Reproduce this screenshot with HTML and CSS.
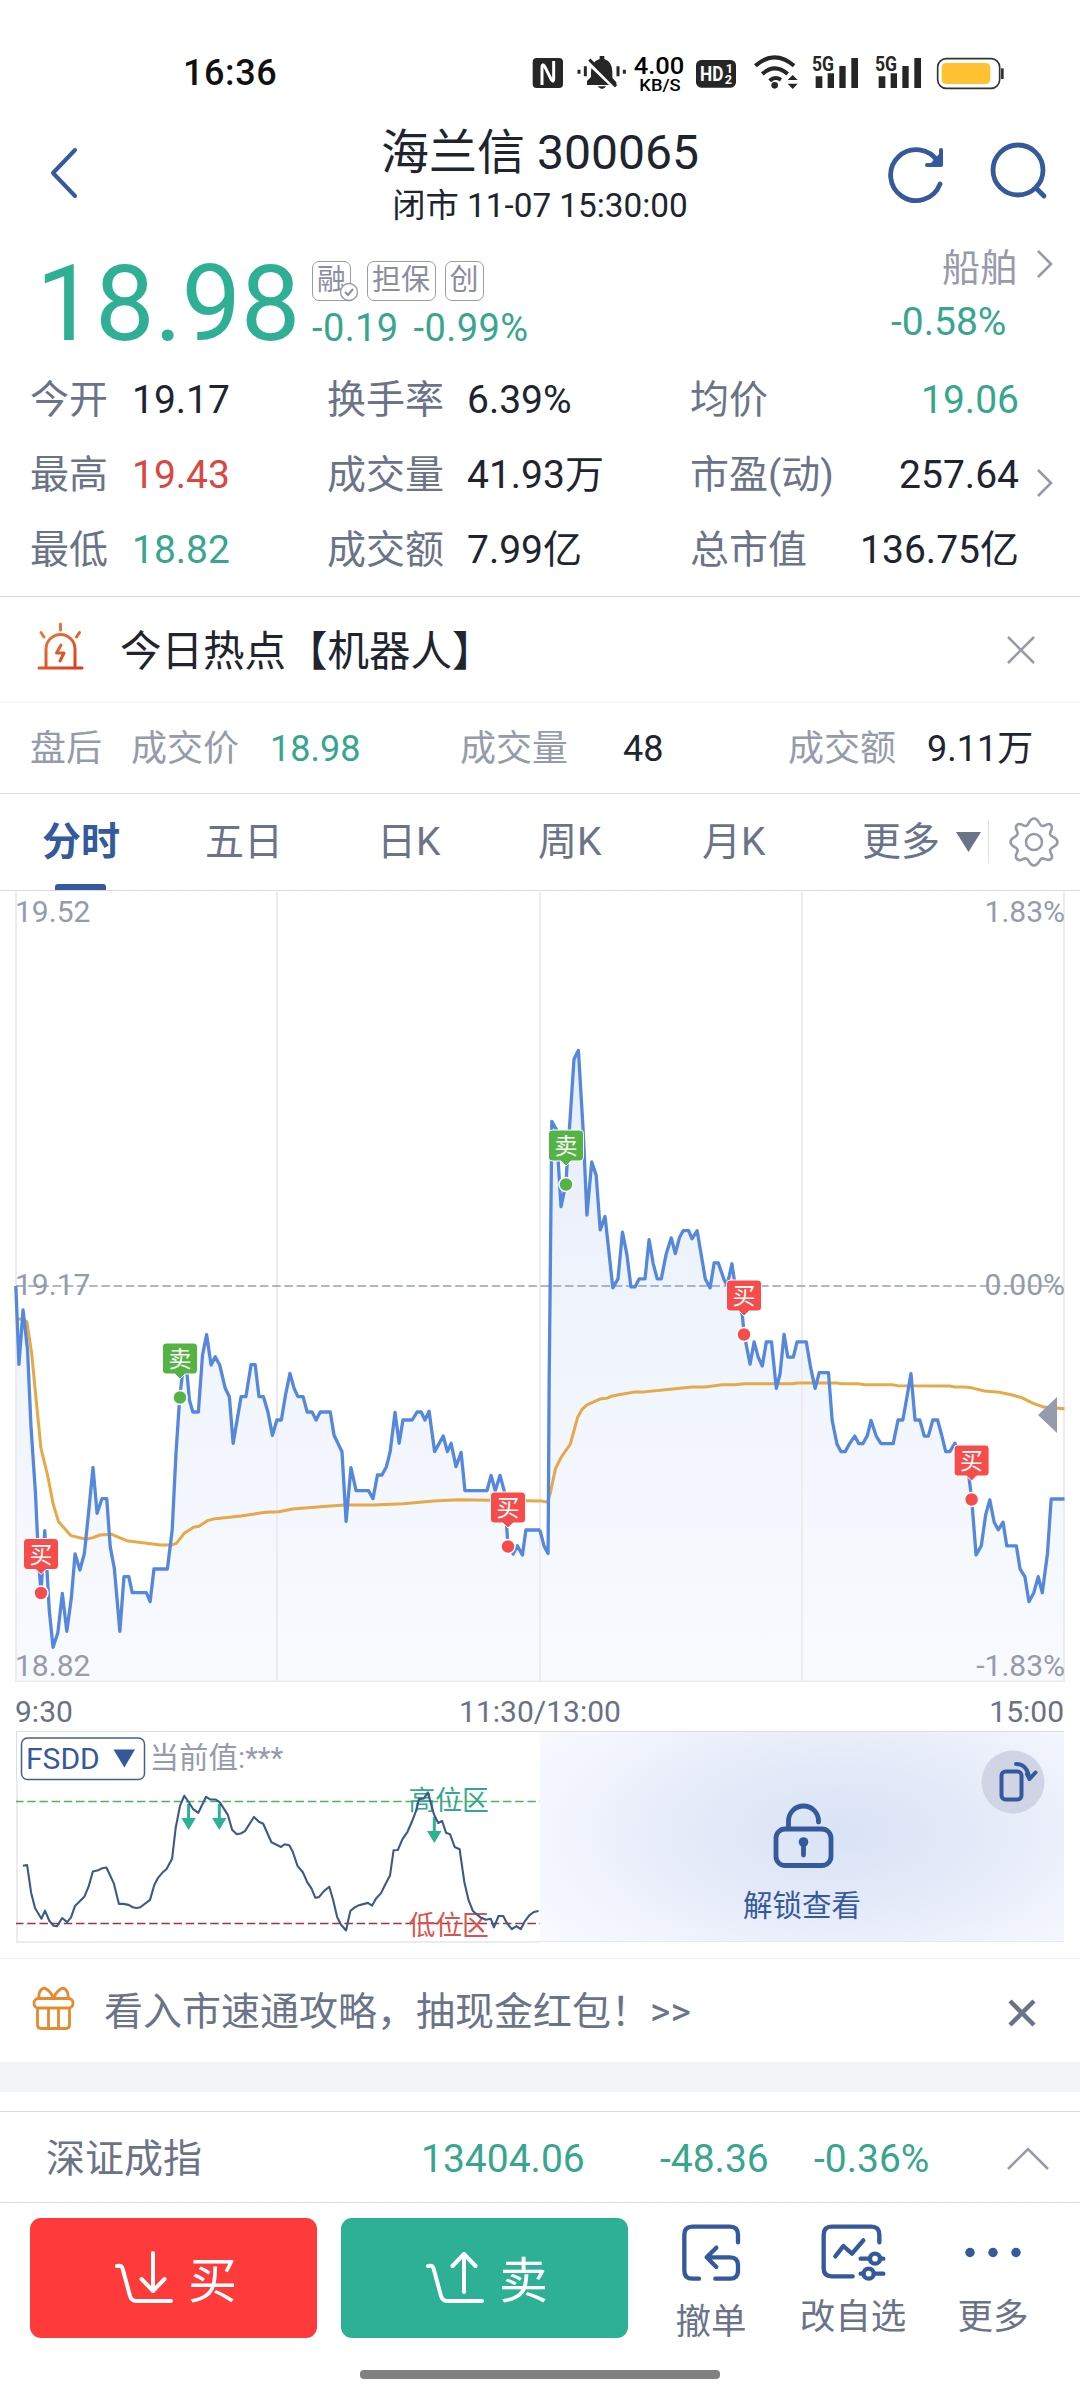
FILE: index.html
```html
<!DOCTYPE html>
<html lang="zh-CN">
<head>
<meta charset="utf-8">
<title>海兰信 300065</title>
<link rel="stylesheet" href="styles.css">
</head>
<body>
<div class="screen">

  <div class="status">
    <span class="clock">16:36</span>
    <svg class="status-icons" width="500" height="64" viewBox="0 0 1500 192">
      <rect x="38" y="51" width="91" height="90" rx="12" fill="#262626"/>
      <path d="M66 132V78Q66 66 74 76L94 116Q101 126 101 114V60" fill="none" stroke="#fff" stroke-width="9" stroke-linejoin="round"/>
      <path d="M177 86v12M196 76v30M294 76v30M313 86v12" stroke="#262626" stroke-width="9"/>
      <path d="M201 132v-12l12-12V92q0-30 26-38v-9h14v9q24 8 24 38v18l12 14v8Z" fill="#262626"/>
      <path d="M233 136h26q-13 16-26 0Z" fill="#262626"/>
      <path d="M199 60l88 84" stroke="#fff" stroke-width="10"/>
      <path d="M208 56l80 80" stroke="#262626" stroke-width="9"/>
      <text x="341" y="98" class="net-a" textLength="152" lengthAdjust="spacingAndGlyphs">4.00</text>
      <text x="358" y="150" class="net-b" textLength="124" lengthAdjust="spacingAndGlyphs">KB/S</text>
      <rect x="528" y="57" width="120" height="83" rx="16" fill="#262626"/>
      <text x="540" y="121" class="hd" textLength="70" lengthAdjust="spacingAndGlyphs">HD</text>
      <text x="617" y="95" class="hd-s">1</text>
      <text x="614" y="130" class="hd-s">2</text>
      <path d="M706 74q58-50 116 0M727 99q37-34 76 0M749 119q15-14 34-3" fill="none" stroke="#262626" stroke-width="12"/>
      <circle cx="764" cy="133" r="10" fill="#262626"/>
      <path d="M803 117l15-15 15 15ZM803 128l15 16 15-16Z" fill="#262626"/>
      <path d="M887 106h20v35h-20ZM923 97h19v44h-19ZM958 75h19v66h-19ZM994 51h20v90h-20Z" fill="#262626"/>
      <text x="876" y="90" class="fiveg" textLength="66" lengthAdjust="spacingAndGlyphs">5G</text>
      <path d="M1076 106h20v35h-20ZM1112 97h19v44h-19ZM1147 75h19v66h-19ZM1183 51h20v90h-20Z" fill="#262626"/>
      <text x="1065" y="90" class="fiveg" textLength="66" lengthAdjust="spacingAndGlyphs">5G</text>
      <rect x="1253" y="53" width="186" height="89" rx="26" fill="#fff" stroke="#333" stroke-width="5"/>
      <rect x="1265" y="66" width="146" height="63" rx="14" fill="#ffc233"/>
      <path d="M1447 82v32" stroke="#333" stroke-width="8"/>
    </svg>
  </div>

  <header class="header">
    <svg class="back" width="30" height="54" viewBox="0 0 30 54"><path d="M26 3L4 26l22 23" class="line-blue w4"/></svg>
    <div class="titles">
      <h1>海兰信 300065</h1>
      <p>闭市 11-07 15:30:00</p>
    </div>
    <svg class="refresh" width="60" height="60" viewBox="0 0 60 60">
      <path d="M52 40A25.500 25.500 0 1 1 50 18" class="line-blue w5"/>
      <path d="M53 6V21H39" class="line-blue w4"/>
      <path d="M52 9V20H42Z" fill="#34599c"/>
    </svg>
    <svg class="search" width="60" height="60" viewBox="0 0 60 60">
      <circle cx="28" cy="28" r="25" class="line-blue w5"/>
      <path d="M46 46l8 8" class="line-blue w5"/>
    </svg>
  </header>

  <section class="quote">
    <div class="price">18.98</div>
    <div class="quote-mid">
      <div class="tags">
        <span class="tag">融<svg class="tick" width="20" height="20" viewBox="0 0 20 20"><circle cx="10" cy="10" r="8.500" fill="#fff" stroke="#9496a8" stroke-width="1.300"/><path d="M6 10l3 3 5-6" fill="none" stroke="#8b8da3" stroke-width="2"/></svg></span>
        <span class="tag wide">担保</span>
        <span class="tag">创</span>
      </div>
      <div class="change"><span>-0.19</span><span>-0.99%</span></div>
    </div>
    <div class="sector">
      <div class="sector-name">船舶<svg width="18" height="32" viewBox="0 0 18 32"><path d="M2 3l13 13L2 29" class="line-grey w3"/></svg></div>
      <div class="sector-pct">-0.58%</div>
    </div>
  </section>

  <section class="stats">
    <div class="grid">
      <span class="lb">今开</span><span>19.17</span><span class="lb">换手率</span><span>6.39%</span><span class="lb">均价</span><span class="num green">19.06</span>
      <span class="lb">最高</span><span class="red">19.43</span><span class="lb">成交量</span><span>41.93万</span><span class="lb">市盈(动)</span><span class="num">257.64</span>
      <span class="lb">最低</span><span class="green">18.82</span><span class="lb">成交额</span><span>7.99亿</span><span class="lb">总市值</span><span class="num">136.75亿</span>
    </div>
    <svg class="stats-more" width="18" height="32" viewBox="0 0 18 32"><path d="M2 3l13 13L2 29" class="line-grey w3"/></svg>
  </section>

  <section class="hot">
    <svg width="50" height="50" viewBox="0 0 50 50">
      <defs><linearGradient id="fire" gradientUnits="userSpaceOnUse" x1="8" y1="4" x2="40" y2="48"><stop offset="0" stop-color="#e0853f"/><stop offset="1" stop-color="#dc3a20"/></linearGradient></defs>
      <g fill="none" stroke="url(#fire)" stroke-width="3" stroke-linecap="round" stroke-linejoin="round">
        <path d="M3 46H46"/><path d="M10 45V27a14.500 14.500 0 0 1 29 0V45"/><path d="M5 10.500l3 4.500M43.500 10.500l-3 4.500"/><path d="M25 23l-4.500 8h7.500l-4 8"/><path d="M24.500 2v6"/>
      </g>
    </svg>
    <span class="hot-text">今日热点【机器人】</span>
    <svg class="hot-close" width="30" height="30" viewBox="0 0 30 30"><path d="M2 2l26 26M28 2L2 28" class="line-grey w3"/></svg>
  </section>

  <section class="after">
    <span>盘后</span><span>成交价</span><span class="green">18.98</span><span>成交量</span><span class="dark">48</span><span>成交额</span><span class="dark">9.11万</span>
  </section>

  <nav class="tabs">
    <span class="on">分时</span><span>五日</span><span>日K</span><span>周K</span><span>月K</span><span class="more">更多</span>
    <svg class="tri" width="26" height="22" viewBox="0 0 26 22"><path d="M0 1h25L12.500 21Z" fill="#6b7388"/></svg>
    <i class="sep"></i>
    <svg class="gear" width="52" height="52" viewBox="0 0 52 52">
      <path d="M26 2.500c5 0 4.500 6 7.800 7.400S40 5.500 43 9s-2 6.500-.8 9.600S49.500 21 49.500 26s-6 4.500-7.300 7.700S46.500 40 43 43s-6.500-1.600-9.300-.5S31 49.500 26 49.500s-4.500-6-7.700-7S12.500 46.500 9 43s1.500-6 .5-9.300S2.500 31 2.500 26s5.800-4.500 7-7.700S5.500 12.500 9 9s6.200 2.200 9.300.9S21 2.500 26 2.500Z" class="line-grey w3"/>
      <circle cx="26" cy="26" r="8" class="line-grey w3"/>
    </svg>
  </nav>

  <svg class="chart" width="1080" height="791" viewBox="0 891 1080 791">
    <defs>
      <linearGradient id="area" gradientUnits="userSpaceOnUse" x1="0" y1="1040" x2="0" y2="1681">
        <stop offset="0" stop-color="#e6edfb"/><stop offset=".45" stop-color="#f0f4fc"/><stop offset="1" stop-color="#f8fafe"/>
      </linearGradient>
      <clipPath id="under">
        <path transform="translate(0 1240) scale(.34439 .33333)" d="M46 1325V138L55 373 67 210 80 330 90 560 103 760 112 960 119 1057 130 872 143 1110 154 1222 168 1178 181 1060 194 1174 207 1075 218 942 232 990 245 940 258 810 270 682 282 820 296 776 310 776 320 920 332 985 348 1174 360 1010 374 1010 384 1058 425 1058 436 1085 447 987 486 987 500 870 511 640 522 470 530 400 543 400 550 480 560 516 576 516 588 345 600 284 613 375 625 350 638 375 654 445 666 470 677 610 700 470 714 470 729 374 741 374 752 470 765 470 778 516 791 586 804 540 817 540 829 465 842 400 854 445 865 470 880 470 892 516 906 516 918 540 930 516 959 516 970 586 993 635 1005 844 1019 683 1034 752 1070 752 1083 776 1096 705 1109 705 1122 680 1133 635 1147 517 1159 610 1170 540 1197 540 1211 516 1223 516 1234 540 1246 514 1262 635 1287 588 1299 635 1310 610 1324 680 1339 637 1350 752 1414 752 1426 706 1438 752 1452 706 1464 752 1475 917 1490 942 1502 917 1517 945 1527 870 1569 870V1325Z"/>
        <path transform="translate(500 1020) scale(.36991 .44643)" d="M108 1480V1143L119 1178 130 1195 133 800 139 320 140 227 152 245 165 418 178 367 188 240 200 88 212 68 225 250 235 437 248 318 260 348 271 470 284 440 305 600 319 580 331 475 343 525 354 598 365 598 376 580 392 580 403 492 414 545 425 580 436 580 449 525 463 488 474 523 485 488 495 472 510 472 519 490 533 472 555 580 568 600 579 544 590 544 605 580 614 595 627 546 640 620 655 660 660 703 676 771 687 721 698 755 709 775 720 721 734 721 747 825 757 793 768 704 778 755 793 755 803 721 828 721 840 780 852 825 863 790 888 790 898 897 911 950 922 967 933 967 945 949 959 932 970 949 981 949 993 931 1003 897 1017 932 1030 949 1063 949 1076 896 1089 896 1100 845 1111 792 1122 896 1135 896 1147 932 1158 932 1170 896 1183 896 1194 930 1205 967 1216 967 1230 948 1243 985 1262 985 1275 1072 1287 1198 1301 1178 1313 1108 1324 1075 1336 1125 1347 1142 1360 1125 1370 1178 1396 1178 1406 1230 1419 1247 1430 1303 1443 1283 1455 1247 1466 1283 1480 1195 1490 1073 1526 1073V1480Z"/>
      </clipPath>
      <g id="pin">
        <path d="M-14-54.500h28q3.500 0 3.500 3.500v24q0 3.500-3.500 3.500H5L0-18.500-5-23.500h-9q-3.500 0-3.500-3.500v-24q0-3.500 3.500-3.500Z" stroke="#fff" stroke-width="1"/>
        <circle r="7" stroke="#fff" stroke-width="1.500"/>
      </g>
    </defs>
    <rect x="16" y="1000" width="1048" height="681" fill="url(#area)" clip-path="url(#under)"/>
    <path d="M16 892V1681.500M277 892V1681.500M540 892V1681.500M802 892V1681.500M1064 892V1681.500M15 1681.500H1065" class="gridline"/>
    <path d="M16 1286H1064" class="mid"/>
    <g class="avg">
      <path transform="translate(0 1240) scale(.34439 .33333)" d="M50 237L60 237 78 245 92 340 105 480 119 625 138 705 155 795 170 845 206 887 250 898 270 893 290 885 325 883 340 890 368 902 420 909 465 915 497 915 512 910 535 880 562 862 578 859 602 842 625 836 700 828 770 817 810 815 850 807 930 800 1000 795 1085 795 1170 791 1260 783 1330 779 1568 783"/>
      <path transform="translate(500 1020) scale(.36991 .44643)" d="M108 1077L128 1080 136 1060 150 1005 165 980 190 950 210 890 222 872 235 862 270 849 290 847 300 843 325 839 365 833 390 833 460 827 520 822 555 822 600 817 635 817 660 815 790 815 805 813 910 813 925 815 970 815 985 817 1060 817 1075 819 1215 820 1230 822 1255 822 1275 824 1310 831 1350 834 1385 840 1410 846 1440 858 1470 867 1526 871"/>
    </g>
    <g class="cur">
      <path transform="translate(0 1240) scale(.34439 .33333)" d="M46 138L55 373 67 210 80 330 90 560 103 760 112 960 119 1057 130 872 143 1110 154 1222 168 1178 181 1060 194 1174 207 1075 218 942 232 990 245 940 258 810 270 682 282 820 296 776 310 776 320 920 332 985 348 1174 360 1010 374 1010 384 1058 425 1058 436 1085 447 987 486 987 500 870 511 640 522 470 530 400 543 400 550 480 560 516 576 516 588 345 600 284 613 375 625 350 638 375 654 445 666 470 677 610 700 470 714 470 729 374 741 374 752 470 765 470 778 516 791 586 804 540 817 540 829 465 842 400 854 445 865 470 880 470 892 516 906 516 918 540 930 516 959 516 970 586 993 635 1005 844 1019 683 1034 752 1070 752 1083 776 1096 705 1109 705 1122 680 1133 635 1147 517 1159 610 1170 540 1197 540 1211 516 1223 516 1234 540 1246 514 1262 635 1287 588 1299 635 1310 610 1324 680 1339 637 1350 752 1414 752 1426 706 1438 752 1452 706 1464 752 1475 917 1490 942 1502 917 1517 945 1527 870 1569 870"/>
      <path transform="translate(500 1020) scale(.36991 .44643)" d="M108 1143L119 1178 130 1195 133 800 139 320 140 227 152 245 165 418 178 367 188 240 200 88 212 68 225 250 235 437 248 318 260 348 271 470 284 440 305 600 319 580 331 475 343 525 354 598 365 598 376 580 392 580 403 492 414 545 425 580 436 580 449 525 463 488 474 523 485 488 495 472 510 472 519 490 533 472 555 580 568 600 579 544 590 544 605 580 614 595 627 546 640 620 655 660 660 703 676 771 687 721 698 755 709 775 720 721 734 721 747 825 757 793 768 704 778 755 793 755 803 721 828 721 840 780 852 825 863 790 888 790 898 897 911 950 922 967 933 967 945 949 959 932 970 949 981 949 993 931 1003 897 1017 932 1030 949 1063 949 1076 896 1089 896 1100 845 1111 792 1122 896 1135 896 1147 932 1158 932 1170 896 1183 896 1194 930 1205 967 1216 967 1230 948 1243 985 1262 985 1275 1072 1287 1198 1301 1178 1313 1108 1324 1075 1336 1125 1347 1142 1360 1125 1370 1178 1396 1178 1406 1230 1419 1247 1430 1303 1443 1283 1455 1247 1466 1283 1480 1195 1490 1073 1526 1073"/>
    </g>
    <path d="M1038 1415l19-18v36Z" fill="#959bab"/>
    <g class="scale">
      <text x="15" y="922">19.52</text><text x="15" y="1294.500">19.17</text><text x="15" y="1676">18.82</text>
      <text x="1065" y="922" class="end">1.83%</text><text x="1065" y="1294.500" class="end">0.00%</text><text x="1065" y="1676" class="end">-1.83%</text>
    </g>
    <g class="pin buy" transform="translate(41 1593)"><use href="#pin"/><text y="-30.500">买</text></g>
    <g class="pin sell" transform="translate(180 1397.500)"><use href="#pin"/><text y="-30.500">卖</text></g>
    <g class="pin buy" transform="translate(508 1546.500)"><use href="#pin"/><text y="-30.500">买</text></g>
    <g class="pin sell" transform="translate(566 1184.500)"><use href="#pin"/><text y="-30.500">卖</text></g>
    <g class="pin buy" transform="translate(744 1334.500)"><use href="#pin"/><text y="-30.500">买</text></g>
    <g class="pin buy" transform="translate(971.600 1499.500)"><use href="#pin"/><text y="-30.500">买</text></g>
  </svg>

  <div class="axis"><span>9:30</span><span>11:30/13:00</span><span>15:00</span></div>

  <section class="sub">
    <svg class="fsdd" width="524" height="212" viewBox="16 1731 524 212">
      <path d="M17 1781V1942H540" fill="none" stroke="#ececee" stroke-width="2"/>
      <path d="M16.500 1781V1731.500H540" fill="none" stroke="#dcdde1" stroke-width="1"/>
      <rect x="21.500" y="1738" width="123" height="41.500" rx="6" fill="#fff" stroke="#44608f" stroke-width="1.500"/>
      <text x="26" y="1769" class="fs-name">FSDD</text>
      <path d="M113.500 1749.500h21.500l-10.700 18Z" fill="#34599c"/>
      <text x="149.500" y="1768" class="fs-val">当前值:***</text>
      <path d="M15 1801.500H540" stroke="#4fb45a" stroke-width="1.500" stroke-dasharray="8.500 3.700"/>
      <path d="M15 1923.500H540" stroke="#a03438" stroke-width="1.500" stroke-dasharray="8.500 3.700"/>
      <text x="408.500" y="1810" class="zone teal">高位区</text>
      <text x="408.500" y="1934.500" class="zone reddish">低位区</text>
      <path d="M188.600 1804v18M219.300 1804v18M434.300 1817v18" stroke="#2db096" stroke-width="3"/>
      <path d="M181.400 1818h14.400l-7.200 12ZM212.100 1818h14.400l-7.200 12ZM427.100 1831h14.400l-7.200 12Z" fill="#2db096"/>
      <path class="osc" transform="translate(0 1679.500) scale(.35714 .33692)" d="M64 553L76 551 87 632 98 678 116 710 126 686 138 716 150 731 160 732 174 708 188 720 199 706 210 672 236 645 248 615 260 570 275 566 287 560 298 558 319 606 333 666 345 666 360 669 372 676 382 678 393 676 420 654 432 610 443 588 455 573 466 563 482 531 492 440 504 375 516 345 529 365 541 385 555 396 577 348 588 356 603 356 615 364 638 402 650 446 663 459 674 457 686 450 711 408 725 422 737 428 760 483 787 497 797 489 810 492 820 512 833 553 848 572 861 603 872 620 883 648 893 646 907 628 922 615 933 655 944 705 955 728 969 745 975 715 981 687 992 677 1003 671 1030 663 1042 671 1053 650 1067 634 1078 610 1092 582 1102 507 1114 506 1127 474 1141 452 1153 423 1165 390 1173 355 1187 353 1198 335 1215 400 1227 426 1238 420 1249 455 1260 459 1273 497 1287 504 1300 600 1312 655 1324 687 1345 706 1360 713 1374 710 1383 736 1396 702 1409 702 1420 724 1433 741 1446 732 1458 741 1470 717 1482 700 1495 690 1508 687"/>
    </svg>
    <div class="unlock">
      <svg class="lock" width="62" height="68" viewBox="0 0 62 68">
        <rect x="3" y="27" width="55" height="36.500" rx="9" class="line-blue w5"/>
        <path d="M15.500 26V19a15 15 0 0 1 30 0v1" class="line-blue w5"/>
        <circle cx="30.500" cy="40" r="4.800" fill="#34599c"/><path d="M30.500 41v12" class="line-blue w5"/>
      </svg>
      <span>解锁查看</span>
      <svg class="rotate" width="64" height="64" viewBox="0 0 64 64">
        <circle cx="32" cy="32" r="31.500" fill="#d1d4e4"/>
        <rect x="20.500" y="21.500" width="20" height="28" rx="4" class="line-blue w4"/>
        <path d="M35 14c8 0 12 5 13.500 15M48.500 29l-2.500-5M48.500 29l6-6.500" class="line-blue w4"/>
      </svg>
    </div>
  </section>

  <section class="promo">
    <svg width="44" height="46" viewBox="0 0 44 46" fill="none" stroke="#e6892f" stroke-width="2.800" stroke-linejoin="round">
      <rect x="2" y="13.500" width="39" height="9.500" rx="4.500"/><path d="M5.500 23v17q0 3.500 3.500 3.500h25q3.500 0 3.500-3.500V23M16.500 23v20M26.500 23v20M7 13C6 6 11 1 15 4.500c3 2 5 4 6.500 9 1.500-5 3.500-7 6.500-9C32 1 37 6 36 13"/>
    </svg>
    <span class="promo-text">看入市速通攻略，抽现金红包！&gt;&gt;</span>
    <svg class="promo-close" width="28" height="28" viewBox="0 0 28 28"><path d="M2 2l24 24M26 2L2 26" stroke="#6b7388" stroke-width="4.500"/></svg>
  </section>
  <div class="band"></div>

  <section class="index">
    <span class="idx-name">深证成指</span><span>13404.06</span><span>-48.36</span><span>-0.36%</span>
    <svg width="42" height="24" viewBox="0 0 42 24"><path d="M1 22L21 2l20 20" class="line-grey w3"/></svg>
  </section>

  <footer class="actions">
    <button class="btn buy-btn">
      <svg width="58" height="54" viewBox="0 0 58 54"><path d="M2 15c4-1 5 0 6 4l7 26q1.500 5 6 5h35M38 2v36M26.500 28L38 40l11.500-12"/></svg><span>买</span>
    </button>
    <button class="btn sell-btn">
      <svg width="58" height="54" viewBox="0 0 58 54"><path d="M2 15c4-1 5 0 6 4l7 26q1.500 5 6 5h35M38 41V3M26.500 15L38 3l11.500 12"/></svg><span>卖</span>
    </button>
    <div class="act cancel">
      <svg width="64" height="60" viewBox="120 65 192 180" class="act-icon"><path d="M180 235H160Q136 235 136 211V103Q136 79 160 79H273Q297 79 297 103V126M229 235H273Q297 235 297 211V195Q297 171 273 171H205M232 142L203 171 232 200"/></svg>
      <span>撤单</span>
    </div>
    <div class="act edit">
      <svg width="68" height="60" viewBox="536 65 204 180" class="act-icon"><path d="M637 228H574Q550 228 550 204V103Q550 79 574 79H693Q717 79 717 103V126M585 168L609 137 635 160 669 120M661 175H686M722 175H729M661 220H667M704 220H729"/><circle cx="704" cy="175" r="15"/><circle cx="685" cy="220" r="15"/></svg>
      <span>改自选</span>
    </div>
    <div class="act other">
      <svg width="60" height="60" viewBox="0 0 60 60"><circle cx="7" cy="30.500" r="4.700"/><circle cx="30" cy="30.500" r="4.700"/><circle cx="53" cy="30.500" r="4.700"/></svg>
      <span>更多</span>
    </div>
  </footer>
  <div class="home"></div>
</div>
</body>
</html>
```
FILE: styles.css
```css
* { box-sizing: border-box; }
body { margin: 0; background: #fff; }
.screen {
  width: 1080px; height: 2400px; overflow: hidden;
  display: flex; flex-direction: column;
  font-family: Roboto, "Noto Sans CJK SC", sans-serif;
  font-size: 39px; color: #20242f; background: #fff;
}
.screen > * { flex: none; }
svg { display: block; flex: none; }
.green { color: #38a68e; }
.red { color: #dc4642; }
.dark { color: #20242f; }
.line-blue { fill: none; stroke: #34599c; stroke-linecap: round; stroke-linejoin: round; }
.line-grey { fill: none; stroke: #959bab; }
.w3 { stroke-width: 2.6; }
.w4 { stroke-width: 4; }
.w5 { stroke-width: 4.8; }

.status { height: 110px; display: flex; align-items: center; padding-top: 36px; }
.clock { width: 337px; margin-left: 183px; font-size: 36px; font-weight: 500; line-height: 40px; color: #111; letter-spacing: .6px; }
.status-icons { margin-top: -1px; }
.net-a { font: 500 70px Roboto; }
.net-b { font: 500 52px Roboto; }
.hd { font: 700 62px Roboto; fill: #fff; }
.hd-s { font: 700 38px Roboto; fill: #fff; }
.fiveg { font: 700 60px Roboto; fill: #262626; stroke: #fff; stroke-width: 6px; paint-order: stroke; }

.header { height: 126px; display: flex; align-items: flex-start; padding-top: 15px; }
.back { margin: 22px 0 0 49px; }
.titles { margin-left: 188px; text-align: center; width: 546px; }
h1 { margin: 0; font-size: 48px; font-weight: 400; line-height: 56px; }
.titles p { margin: 5px 0 0; font-size: 33.3px; line-height: 40px; }
.refresh { margin: 19px 0 0 75px; }
.search { margin: 17px 0 0 42px; }

.quote { height: 126px; display: flex; }
.price { width: 276px; margin: 15px 0 0 36px; font-size: 106px; line-height: 106px; color: #2fb095; letter-spacing: -.5px; }
.quote-mid { width: 560px; padding-top: 25px; }
.tags { display: flex; height: 40px; }
.tag {
  position: relative; height: 40px; width: 39px;
  border: 1.5px solid #9a9cae; border-radius: 7px; white-space: nowrap;
  display: flex; justify-content: center;
  font-size: 29px; line-height: 37px; color: #8b8da3;
}
.tag.wide { width: 69px; margin: 0 9px 0 15.5px; }
.tick { position: absolute; right: -9px; bottom: -2px; }
.change { display: flex; gap: 15px; font-size: 38px; line-height: 46px; margin-top: 4px; color: #38a68e; letter-spacing: .4px; }
.sector { width: 208px; padding-top: 9px; }
.sector-name { display: flex; justify-content: flex-end; align-items: center; gap: 18px; padding-right: 26px; font-size: 38px; line-height: 46px; color: #959bab; }
.sector-name svg { margin-top: -9px; }
.sector-pct { font-size: 39px; line-height: 46px; color: #38a68e; margin-top: 8px; margin-left: 19px; }

.stats { height: 235px; display: flex; border-bottom: 1px solid #d9dbdf; }
.grid {
  display: grid; grid-template-columns: 102px 195px 140px 223px 148px 181px;
  grid-auto-rows: 75px; line-height: 77px; margin-left: 30px; white-space: nowrap;
}
.lb { color: #6b7388; }
.num { text-align: right; }
.stats-more { margin: 105px 0 0 17px; }

.hot { height: 106px; display: flex; align-items: center; border-bottom: 2px solid #f5f6f7; }
.hot > svg:first-child { margin: -4px 0 0 36px; }
.hot-text { width: 886px; margin: 5px 0 0 34px; font-size: 41.5px; line-height: 50px; }
.hot-close { margin-top: 2px; }

.after {
  height: 91px; padding: 2px 0 0 30px; border-bottom: 1px solid #d9dbdf;
  display: grid; grid-template-columns: 101px 139px 190px 163px 165px 139px auto;
  align-items: center; font-size: 36px; line-height: 88px; color: #959bab; white-space: nowrap;
}

.tabs { height: 97px; display: flex; align-items: center; border-bottom: 1px solid #d9dbdf; line-height: 92px; color: #6b7388; white-space: nowrap; }
.tabs span { width: 160px; padding-left: 42px; margin-right: 3px; }
.tabs span:nth-child(3) { padding-left: 51px; margin-right: 0; }
.tabs span:nth-child(4) { padding-left: 52px; }
.tabs span:nth-child(5) { padding-left: 53px; }
.tabs .more { padding-left: 50px; width: 126px; margin-right: 0; }
.tabs .on { position: relative; font-weight: 700; color: #34599c; }
.tabs .on::after { content: ""; position: absolute; left: 55px; bottom: -2px; width: 51px; height: 6px; border-radius: 3px 3px 0 0; background: #34599c; }
.tri { margin-left: 18px; }
.sep { width: 1px; height: 42px; margin-left: 6px; background: #dfe0e3; }
.gear { margin-left: 19px; }

.gridline { fill: none; stroke: #ececee; stroke-width: 2; }
.mid { stroke: #97a1aa; stroke-width: 1.7; stroke-dasharray: 8.5 3.7; }
.avg path, .cur path { fill: none; vector-effect: non-scaling-stroke; stroke-linejoin: round; }
.avg path { stroke: #e5a947; stroke-width: 3; }
.cur path { stroke: #5588dd; stroke-width: 3.3; }
.scale { font-size: 30px; fill: #959bab; }
.end { text-anchor: end; }
.pin text { font-size: 23px; fill: #fff; text-anchor: middle; }
.buy { fill: #f74c4c; }
.sell { fill: #55b344; }

.axis { height: 49px; padding: 0 16px; display: grid; grid-template-columns: 1fr 1fr 1fr; font-size: 30px; line-height: 59px; color: #6b7085; }
.axis span:nth-child(1) { margin-left: -1px; }
.axis span:nth-child(2) { text-align: center; }
.axis span:nth-child(3) { text-align: right; }

.sub { height: 228px; display: flex; padding: 0 16px; border-bottom: 1px solid #f0f1f3; align-items: flex-start; }
.fs-name { font-size: 30px; fill: #34599c; }
.fs-val { font-size: 29.5px; fill: #959bab; }
.zone { font-size: 26.8px; }
.teal { fill: #38a68e; }
.reddish { fill: #d9534f; }
.osc { fill: none; stroke: #3a5a8c; stroke-width: 2.1; vector-effect: non-scaling-stroke; stroke-linejoin: round; }
.unlock {
  position: relative; width: 524px; height: 211px; padding-top: 70px;
  display: flex; flex-direction: column; align-items: center;
  border-top: 1px solid #dcdde1; border-bottom: 1px solid #e6e9f2;
  background: radial-gradient(ellipse 62% 78% at 57% 48%, #d9e3f5 0%, #e3e9f8 40%, #ecf0fb 68%, #f3f6fe 90%, #f8fafe 115%);
}
.lock { margin-left: 3px; }
.unlock span { font-size: 29.5px; line-height: 40px; margin-top: 16px; color: #34599c; }
.rotate { position: absolute; right: 19px; top: 18px; }

.promo { height: 103px; display: flex; align-items: center; }
.promo > svg:first-child { margin: -6px 0 0 32px; }
.promo-text { width: 904px; margin: 3px 0 0 28px; line-height: 50px; color: #6b7388; }
.promo-close { margin-top: 4px; }
.band { height: 30px; margin-bottom: 19px; background: #f3f4f6; }

.index { height: 92px; padding: 3px 0 0 46px; border-top: 1px solid #d9dbdf; border-bottom: 1px solid #d9dbdf; display: grid; grid-template-columns: 375px 239px 154px 193px auto; align-items: center; line-height: 88px; color: #38a68e; }
.idx-name { color: #6b7388; }

.actions { height: 152px; display: flex; align-items: flex-start; padding-top: 15px; }
.btn {
  width: 287px; height: 120px; margin-left: 30px; padding: 0 0 0 5px; border: 0; border-radius: 11px;
  display: flex; align-items: center; justify-content: center; gap: 15px;
  font: 400 49px/120px Roboto, "Noto Sans CJK SC", sans-serif; color: #fff;
}
.btn span { margin-top: 7px; }
.btn svg { fill: none; stroke: #fff; stroke-width: 4; stroke-linecap: round; stroke-linejoin: round; }
.buy-btn { background: #ff3a3a; }
.sell-btn { margin-left: 24px; background: #2db096; }
.act { display: flex; flex-direction: column; align-items: center; padding-top: 3px; font-size: 35.5px; color: #6b7388; white-space: nowrap; }
.act span { line-height: 46px; margin-top: 14px; }
.act-icon { fill: none; stroke: #34599c; stroke-width: 13; stroke-linecap: round; stroke-linejoin: round; }
.act > svg { margin-top: 1px; }
.cancel { width: 110px; margin-left: 28px; }
.cancel span { margin-top: 17px; }
.edit { width: 120px; margin-left: 27px; }
.edit span { margin-top: 12px; }
.other { width: 100px; margin-left: 30px; }
.other svg { fill: #34599c; }
.other span { margin-top: 12px; }
.home { width: 360px; height: 9px; margin: 15px auto 0; border-radius: 4px; background: #808080; }
```
